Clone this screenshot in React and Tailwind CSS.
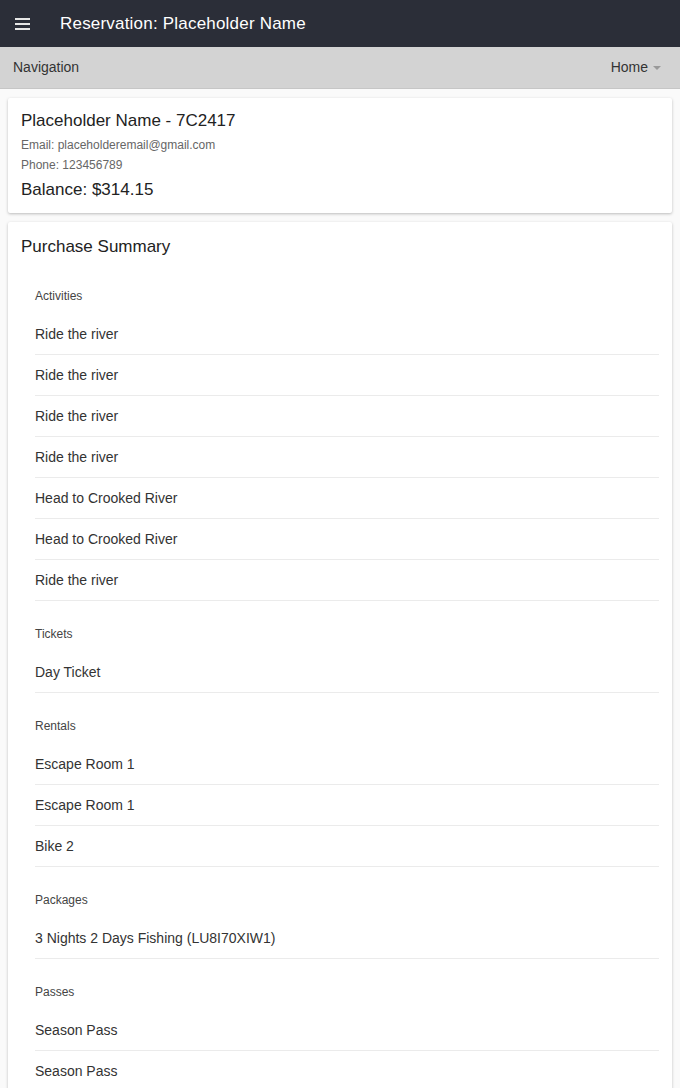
const sections = [
  {
    title: "Activities",
    items: [
      "Ride the river",
      "Ride the river",
      "Ride the river",
      "Ride the river",
      "Head to Crooked River",
      "Head to Crooked River",
      "Ride the river",
    ],
  },
  { title: "Tickets", items: ["Day Ticket"] },
  { title: "Rentals", items: ["Escape Room 1", "Escape Room 1", "Bike 2"] },
  { title: "Packages", items: ["3 Nights 2 Days Fishing (LU8I70XIW1)"] },
  { title: "Passes", items: ["Season Pass", "Season Pass"] },
];

export default function App() {
  return (
    <div className="min-h-screen bg-[#fafafa] text-[#333] font-['Liberation_Sans',Arial,sans-serif]">
      {/* barra superior */}
      <div className="h-[47px] bg-[#2b2e38] flex items-center">
        <div className="w-[60px] flex justify-start pl-[15px]">
          <div className="flex flex-col gap-[3px]">
            <span className="block w-[15px] h-[2px] bg-[#e6e6e6]" />
            <span className="block w-[15px] h-[2px] bg-[#e6e6e6]" />
            <span className="block w-[15px] h-[2px] bg-[#e6e6e6]" />
          </div>
        </div>
        <h1 className="text-[17px] tracking-[0.2px] text-white">Reservation: Placeholder Name</h1>
      </div>

      {/* navegação */}
      <div className="h-[42px] bg-[#d3d3d3] border-b border-[#c6c6c6] flex items-center justify-between pl-[13px] pr-[19px]">
        <span className="text-[14px] text-[#333]">Navigation</span>
        <span className="flex items-center text-[14px] text-[#333]">
          Home
          <span className="ml-[5px] w-0 h-0 border-l-[4px] border-r-[4px] border-t-[4px] border-l-transparent border-r-transparent border-t-[#999]" />
        </span>
      </div>

      {/* cartão do cliente */}
      <div className="mx-[8px] mt-[9px] bg-white rounded-[2px] shadow-[0_1px_3px_rgba(0,0,0,0.25)] px-[13px] pt-[12px] pb-[12px]">
        <div className="text-[17px] leading-[22px] text-[#222]">Placeholder Name - 7C2417</div>
        <div className="mt-[3px] text-[12px] leading-[20px] text-[#666]">Email: placeholderemail@gmail.com</div>
        <div className="text-[12px] leading-[20px] text-[#666]">Phone: 123456789</div>
        <div className="mt-[4px] text-[17px] leading-[22px] text-[#222]">Balance: $314.15</div>
      </div>

      {/* resumo de compras */}
      <div className="mx-[8px] mt-[9px] flex flex-col bg-white rounded-[2px] shadow-[0_1px_3px_rgba(0,0,0,0.25)] pt-[13px] pb-[20px]">
        <div className="px-[13px] text-[17px] leading-[24px] text-[#222] mb-[4px]">Purchase Summary</div>
        <div className="flex flex-col pl-[27px] pr-[13px]">
          {sections.map((s) => (
            <div key={s.title} className="mt-[14px]">
              <div className="h-[37px] flex items-center text-[12px] text-[#444]">{s.title}</div>
              {s.items.map((item, i) => (
                <div
                  key={i}
                  className="h-[41px] flex items-center border-b border-[#ebebeb] text-[14px] text-[#333]"
                >
                  {item}
                </div>
              ))}
            </div>
          ))}
        </div>
      </div>
    </div>
  );
}
